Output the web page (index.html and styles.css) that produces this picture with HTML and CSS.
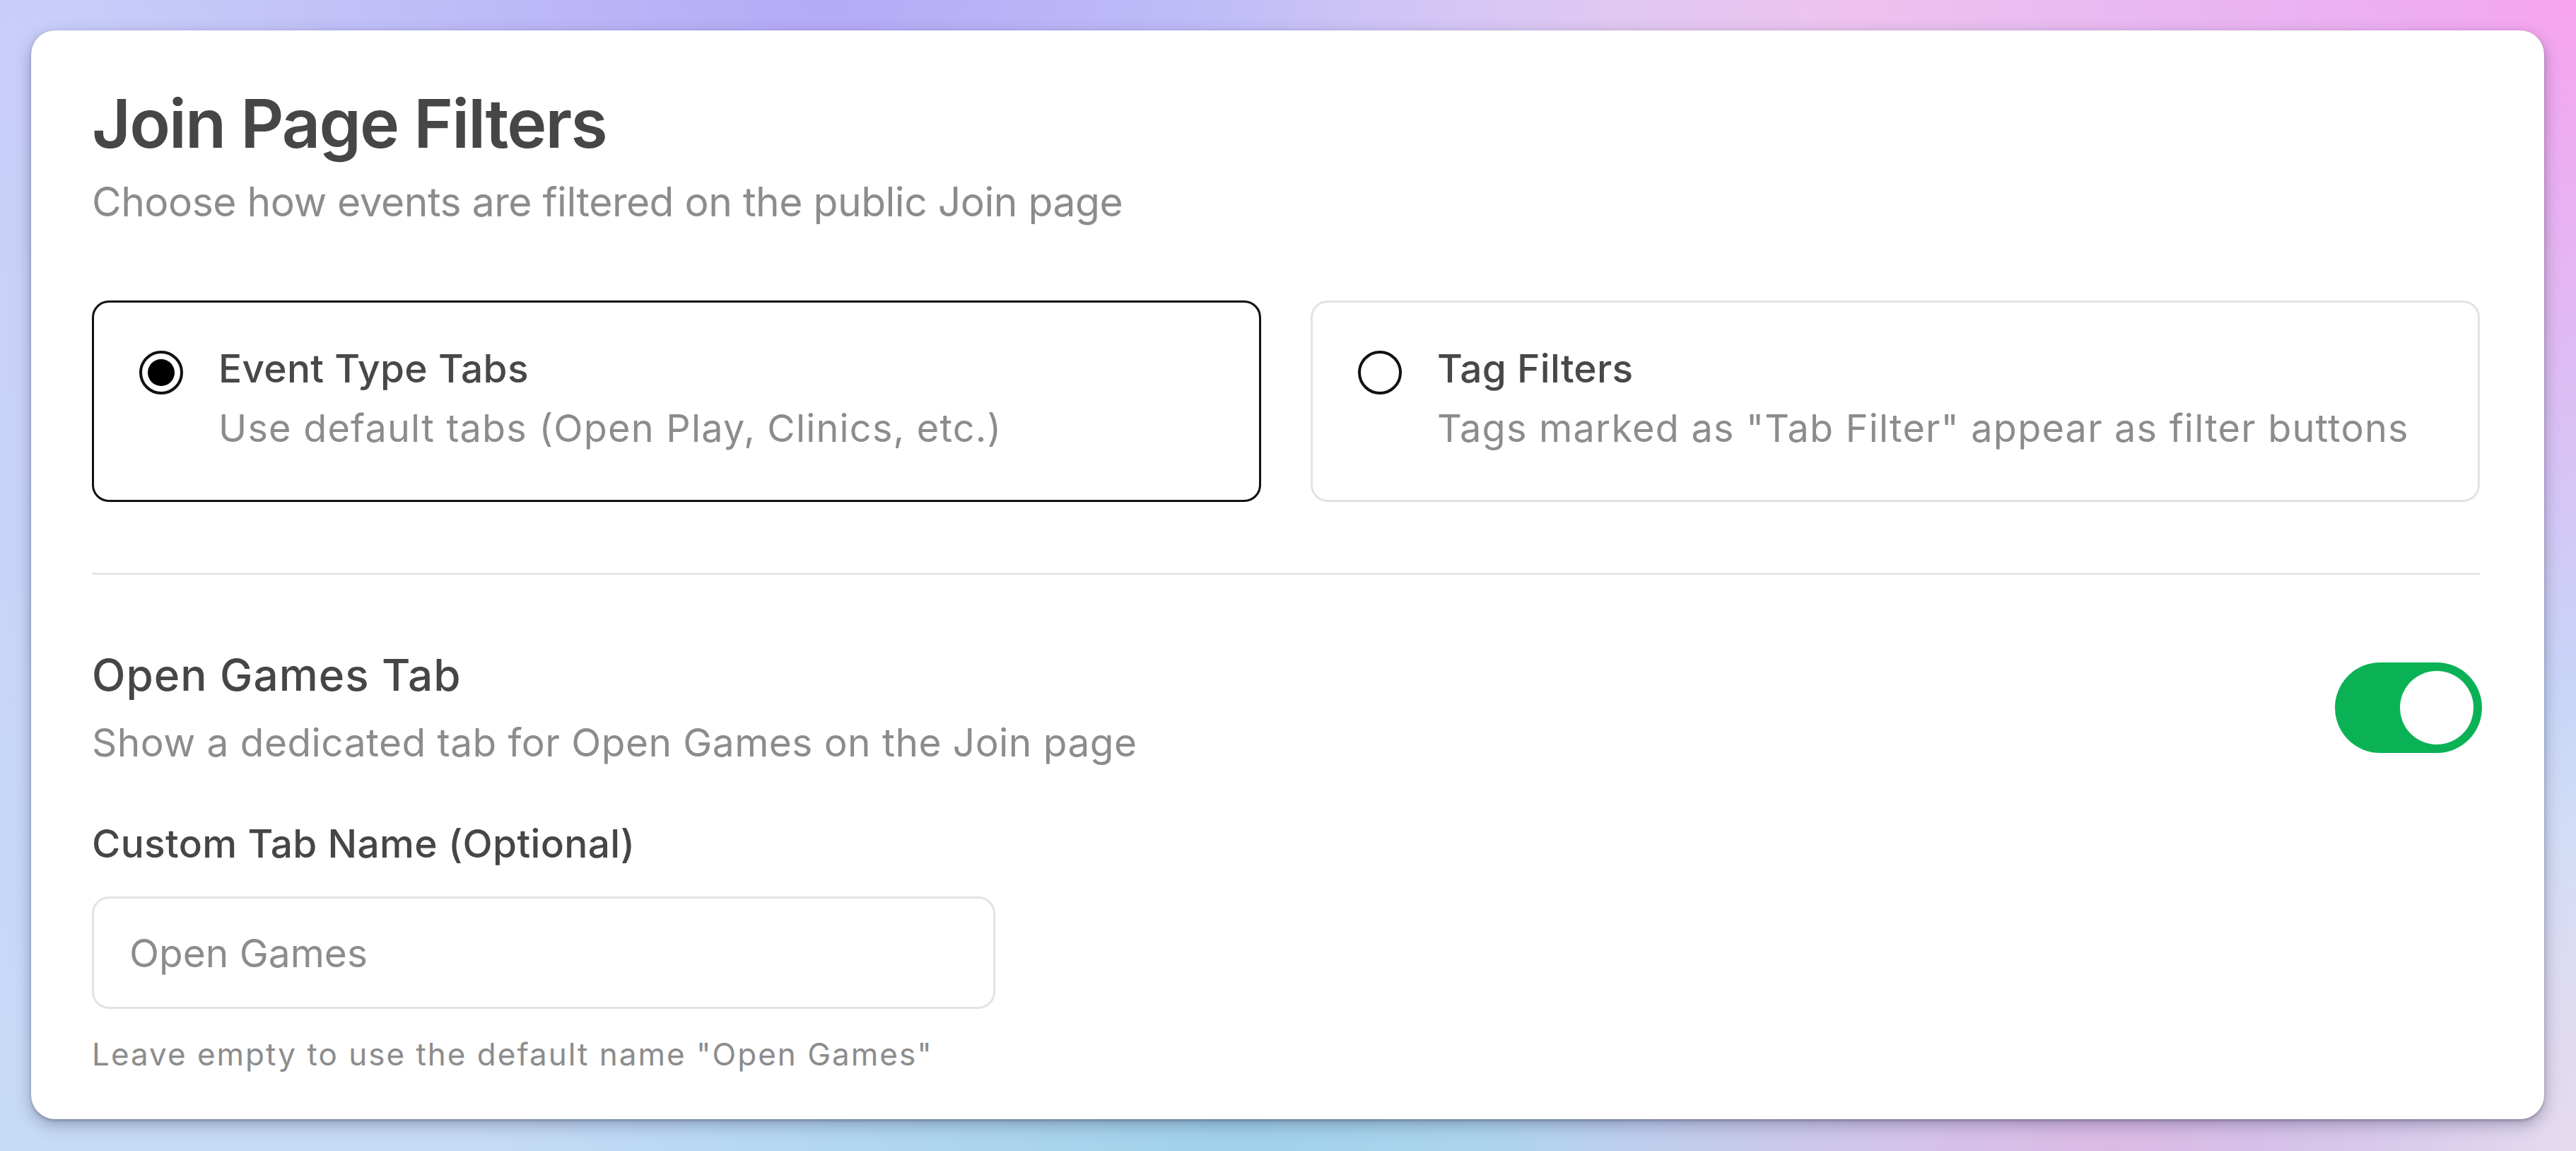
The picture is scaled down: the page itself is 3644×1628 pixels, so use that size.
FILE: index.html
```html
<!DOCTYPE html>
<html lang="en">
<head>
  <meta charset="UTF-8" />
  <title>Join Page Filters</title>
  <link rel="stylesheet" href="styles.css">
</head>
<body>

  <div class="panel">
    <h1>Join Page Filters</h1>
    <p class="lead">Choose how events are filtered on the public Join page</p>

    <!-- Szűrési mód választó -->
    <div class="mode-grid">
      <label class="mode-card selected">
        <span class="radio"></span>
        <span class="mode-text">
          <span class="mode-title">Event Type Tabs</span>
          <span class="mode-desc">Use default tabs (Open Play, Clinics, etc.)</span>
        </span>
      </label>

      <label class="mode-card">
        <span class="radio"></span>
        <span class="mode-text">
          <span class="mode-title">Tag Filters</span>
          <span class="mode-desc">Tags marked as "Tab Filter" appear as filter buttons</span>
        </span>
      </label>
    </div>

    <hr class="divider">

    <div class="setting-row">
      <div>
        <div class="setting-title">Open Games Tab</div>
        <div class="setting-desc">Show a dedicated tab for Open Games on the Join page</div>
      </div>
      <button class="switch on" onclick="this.classList.toggle('on')"><span class="knob"></span></button>
    </div>

    <label class="field-label" for="tabName">Custom Tab Name (Optional)</label>
    <input class="field-input" id="tabName" type="text" placeholder="Open Games">
    <p class="field-hint">Leave empty to use the default name "Open Games"</p>
  </div>

</body>
</html>
```

FILE: styles.css
```css
html, body {
  margin: 0;
  height: 100%;
}

body {
  box-sizing: border-box;
  padding: 43px 45px 45px 44px;
  font-family: Inter, "Noto Sans", sans-serif;
  background:
    radial-gradient(ellipse 30% 60% at 100% 0%, #f7a4ee 0%, rgba(247,164,238,0) 100%),
    radial-gradient(ellipse 25% 40% at 72% 0%, #eec3ee 0%, rgba(238,195,238,0) 100%),
    radial-gradient(ellipse 30% 50% at 32% 0%, #b5aaf6 0%, rgba(181,170,246,0) 100%),
    radial-gradient(ellipse 25% 40% at 82% 100%, #dcb9e4 0%, rgba(220,185,228,0) 100%),
    radial-gradient(ellipse 30% 50% at 48% 100%, #9fd2e9 0%, rgba(159,210,233,0) 100%),
    radial-gradient(ellipse 12% 40% at 100% 100%, #eaeaf4 0%, rgba(234,234,244,0) 100%),
    linear-gradient(to bottom, #c9cef9, #c6dbf6);
}

.panel {
  box-sizing: border-box;
  height: 100%;
  background: #fff;
  border-radius: 34px;
  padding: 74px 91px 0 86px;
  box-shadow: 0 8px 22px rgba(50, 50, 90, 0.35), 0 2px 4px rgba(0, 0, 0, 0.25);
  color: #464646;
}

h1 {
  margin: 0;
  font-size: 95px;
  line-height: 116px;
  font-weight: 600;
  letter-spacing: -1.9px;
}

.lead {
  margin: 12px 0 0;
  font-size: 57px;
  line-height: 81px;
  letter-spacing: -0.5px;
  color: #8c8c8c;
}

/* Kártyák */
.mode-grid {
  display: grid;
  grid-template-columns: 1fr 1fr;
  gap: 70px;
  margin-top: 99px;
}

.mode-card {
  display: flex;
  align-items: flex-start;
  gap: 50px;
  height: 285px;
  box-sizing: border-box;
  padding: 55px 64px 0;
  border: 3px solid #e3e3e3;
  border-radius: 24px;
  cursor: pointer;
}

.mode-card.selected {
  border-color: #111;
}

.radio {
  flex: none;
  box-sizing: border-box;
  width: 62px;
  height: 62px;
  margin-top: 13px;
  border: 4px solid #111;
  border-radius: 50%;
  position: relative;
}

.mode-card.selected .radio::after {
  content: "";
  position: absolute;
  top: 8px; left: 8px;
  width: 38px; height: 38px;
  border-radius: 50%;
  background: #000;
}

.mode-text {
  display: flex;
  flex-direction: column;
  gap: 9px;
}

.mode-title {
  font-size: 55px;
  line-height: 77px;
  font-weight: 500;
  letter-spacing: 0.3px;
  color: #484848;
}

.mode-desc {
  font-size: 54px;
  line-height: 74px;
  letter-spacing: 1.2px;
  color: #8c8c8c;
}

.divider {
  border: none;
  height: 3px;
  background: #e5e5e5;
  margin: 100px 0 0;
}

/* Open Games kapcsoló */
.setting-row {
  display: flex;
  justify-content: space-between;
  align-items: center;
  margin-top: 100px;
}

.setting-title {
  font-size: 62px;
  line-height: 84px;
  font-weight: 500;
  letter-spacing: 1px;
  color: #464646;
}

.setting-desc {
  margin-top: 15px;
  font-size: 55px;
  line-height: 77px;
  letter-spacing: 0.45px;
  color: #8c8c8c;
}

.switch {
  position: relative;
  width: 208px;
  height: 128px;
  border: none;
  border-radius: 64px;
  background: #d4d4d4;
  cursor: pointer;
  margin-right: -3px;
}

.switch.on {
  background: #0bb255;
}

.knob {
  position: absolute;
  top: 12px;
  left: 12px;
  width: 104px;
  height: 104px;
  border-radius: 50%;
  background: #fff;
  transition: 0.2s;
}

.switch.on .knob {
  left: 92px;
}

.field-label {
  display: block;
  margin-top: 66px;
  font-size: 55px;
  line-height: 77px;
  font-weight: 500;
  letter-spacing: 0.35px;
  color: #464646;
}

.field-input {
  display: block;
  box-sizing: border-box;
  width: 1278px;
  height: 159px;
  margin-top: 36px;
  padding: 0 50px;
  border: 3px solid #e3e3e3;
  border-radius: 24px;
  font-family: inherit;
  font-size: 55px;
  color: #464646;
  outline: none;
}

.field-input::placeholder {
  color: #8c8c8c;
}

.field-hint {
  margin: 34px 0 0;
  font-size: 44px;
  line-height: 60px;
  letter-spacing: 2px;
  color: #8c8c8c;
}
```
